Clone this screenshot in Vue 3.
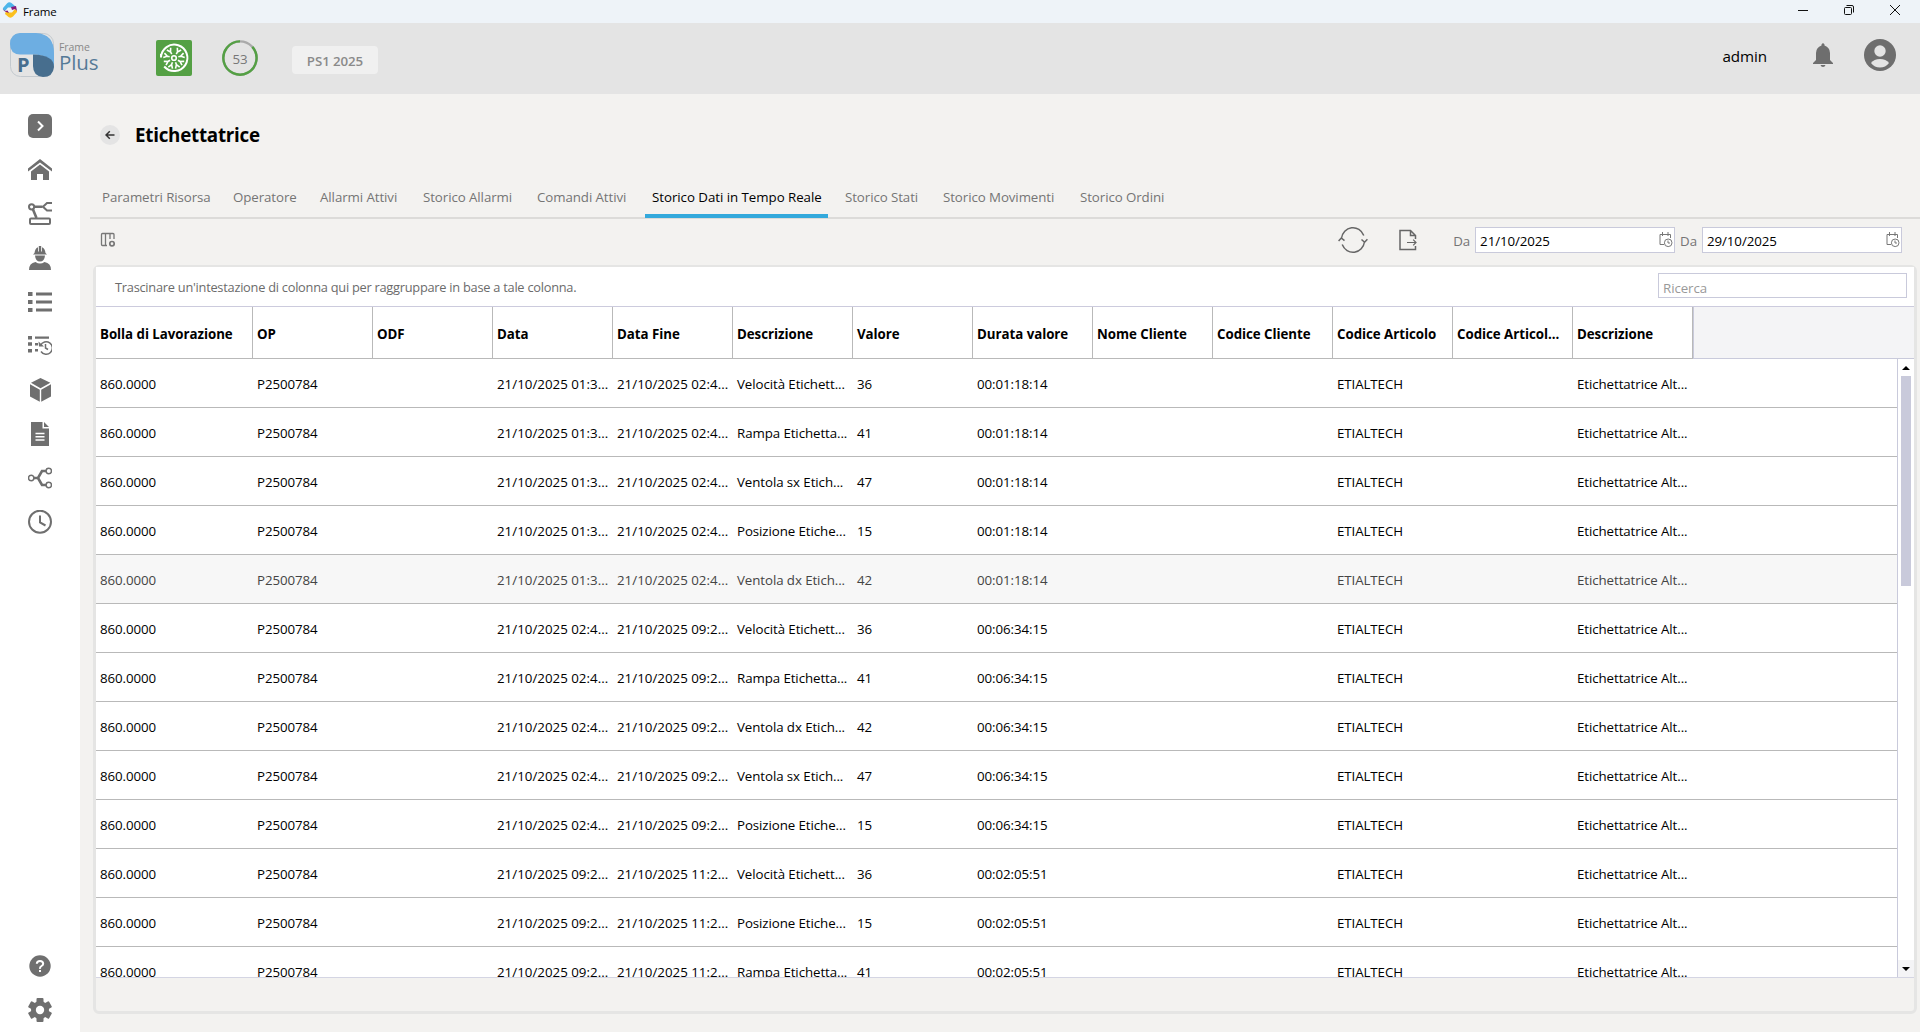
<script setup>
import { ref } from 'vue';

const tabs = [
  'Parametri Risorsa',
  'Operatore',
  'Allarmi Attivi',
  'Storico Allarmi',
  'Comandi Attivi',
  'Storico Dati in Tempo Reale',
  'Storico Stati',
  'Storico Movimenti',
  'Storico Ordini'
];
const activeTab = ref(5);

const columns = [
  'Bolla di Lavorazione',
  'OP',
  'ODF',
  'Data',
  'Data Fine',
  'Descrizione',
  'Valore',
  'Durata valore',
  'Nome Cliente',
  'Codice Cliente',
  'Codice Articolo',
  'Codice Articol...',
  'Descrizione'
];

const makeRow = (start, end, description, value, duration) => [
  '860.0000', 'P2500784', '', `21/10/2025 ${start}...`, `21/10/2025 ${end}...`,
  `${description}...`, value, duration, '', '', 'ETIALTECH', '', 'Etichettatrice Alt...'
];

const rows = [
  makeRow('01:3', '02:4', 'Velocità Etichett', '36', '00:01:18:14'),
  makeRow('01:3', '02:4', 'Rampa Etichetta', '41', '00:01:18:14'),
  makeRow('01:3', '02:4', 'Ventola sx Etich', '47', '00:01:18:14'),
  makeRow('01:3', '02:4', 'Posizione Etiche', '15', '00:01:18:14'),
  makeRow('01:3', '02:4', 'Ventola dx Etich', '42', '00:01:18:14'),
  makeRow('02:4', '09:2', 'Velocità Etichett', '36', '00:06:34:15'),
  makeRow('02:4', '09:2', 'Rampa Etichetta', '41', '00:06:34:15'),
  makeRow('02:4', '09:2', 'Ventola dx Etich', '42', '00:06:34:15'),
  makeRow('02:4', '09:2', 'Ventola sx Etich', '47', '00:06:34:15'),
  makeRow('02:4', '09:2', 'Posizione Etiche', '15', '00:06:34:15'),
  makeRow('09:2', '11:2', 'Velocità Etichett', '36', '00:02:05:51'),
  makeRow('09:2', '11:2', 'Posizione Etiche', '15', '00:02:05:51'),
  makeRow('09:2', '11:2', 'Rampa Etichetta', '41', '00:02:05:51')
];
const hoveredRow = ref(4);

const dateFrom = ref('21/10/2025');
const dateTo = ref('29/10/2025');
const search = ref('');
const spokes = [30, 75, 120, 160, 200, 240, 285, 330];
const teeth = [0, 60, 120, 180, 240, 300];
</script>

<template>
  <div class="window">
    <div class="titlebar">
      <svg class="app-icon" width="16" height="16" viewBox="0 0 16 16">
        <path d="M1 6 5 1.5Q7-.5 9.500 1L13 4l1.500 4-4-2.500H6L3 9Q.5 8 1 6z" fill="#4db5ea" />
        <path d="M15 10 11 14.500Q9 16.500 6.500 15L3 12l1-3 3 1.500h3L13 7Q15.500 8 15 10z" fill="#fbc01e" />
        <path d="M.5 7 3 9.500 7 11 5.500 8.500 3.500 9zM9 5l5-1 1 5-2-2-3 1z" fill="#871a7b" />
      </svg>
      <span class="app-name">Frame</span>
      <div class="window-controls">
        <svg width="12" height="12" viewBox="0 0 12 12"><path d="M1 6.500h10" /></svg>
        <svg width="12" height="12" viewBox="0 0 12 12"><rect x="1.500" y="3.500" width="7" height="7" rx="1" /><path d="M3.500 1.500H9q1.500 0 1.500 1.500v5.500" /></svg>
        <svg width="12" height="12" viewBox="0 0 12 12"><path d="m1 1 10 10M11 1 1 11" /></svg>
      </div>
    </div>

    <header class="header">
      <div class="logo">
        <svg width="44" height="44" viewBox="0 0 44 44">
          <rect x=".5" y=".5" width="43" height="43" rx="10" fill="none" stroke="#c3c9ce" />
          <path d="M10 0H26Q44 1 44 20V34Q41 22 23 21.500H10Q0 21 0 11T10 0z" fill="#6daee2" />
          <path d="M23 21.500Q44 22 44 34 43 44 33 44 23 43 23 33z" fill="#476e8e" />
          <text x="7" y="39" class="logo-letter">P</text>
        </svg>
        <div class="logo-text">
          <span class="logo-small">Frame</span>
          <span class="logo-big">Plus</span>
        </div>
      </div>
      <div class="machine">
        <svg width="36" height="36" viewBox="0 0 36 36" fill="none" stroke="#fff">
          <path d="M5 17.500A13.200 13.200 0 1 1 8.200 26.500M5 14v3.500" stroke-width="2" />
          <circle cx="18" cy="18" r="2.300" stroke-width="1.600" />
          <g v-for="angle in spokes" :key="angle" :transform="`rotate(${angle} 18 18)`">
            <path d="M18 13.500V11M15.800 7.500 18 11l2.200-3.500" stroke-width="1.600" />
          </g>
        </svg>
      </div>
      <div class="gauge">
        <svg width="36" height="36" viewBox="0 0 36 36" fill="none" stroke-width="2.400">
          <circle cx="18" cy="18" r="16.600" stroke="#aaa" />
          <path d="M30.300 6.900A16.600 16.600 0 1 1 18 1.400" stroke="#54a044" />
        </svg>
        <span class="gauge-value">53</span>
      </div>
      <div class="shift">PS1 2025</div>
      <div class="user">
        <span class="user-name">admin</span>
        <svg class="bell" width="20" height="24" viewBox="0 0 20 24">
          <path d="M8.500 2.500V1.500Q10-.8 11.500 1.500v1Q17 4.500 17 10v7l3 3v1H0v-1l3-3v-7Q3 4.500 8.500 2.500zM7.500 22h5Q12 24 10 24T7.500 22z" />
        </svg>
        <svg width="32" height="32" viewBox="0 0 32 32">
          <circle cx="16" cy="16" r="16" />
          <circle cx="16" cy="12" r="5.700" fill="#e4e4e4" />
          <path d="M7 24Q10 20 16 20t9 4Q21.500 28.500 16 28.500T7 24z" fill="#e4e4e4" />
        </svg>
      </div>
    </header>

    <div class="body">
      <nav class="sidebar">
        <svg viewBox="0 0 24 24"><rect width="24" height="24" rx="5" /><path d="m10 7.500 4.500 4.500-4.500 4.500" class="cut" /></svg>
        <svg viewBox="0 0 24 24"><path d="m12 1 12 9.500v3L12 4.500 0 13.500v-3z" /><path d="m12 6.500 9 7V22h-6v-6H9v6H3v-8.500z" /></svg>
        <svg viewBox="0 0 24 24">
          <g class="line">
            <circle cx="3.600" cy="4.800" r="2.600" />
            <path d="M6.500 4.800h8M5 7.500l3.500 8.500" class="heavy" />
            <path d="M24 1h-5l-4 3.800 4 3.700h5" />
            <rect x="2" y="16.500" width="20" height="5.500" rx="1" />
          </g>
        </svg>
        <svg viewBox="0 0 24 24">
          <path d="M5 8.500 6.500 7Q7 2.500 10 1.200v4.300h.8V0h2.400v5.500h.8V1.200Q17 2.500 17.500 7L19 8.500z" />
          <path d="M7 9.500h10q-.5 6-5 6t-5-6zM1 24q0-7 6.500-8 4.500 3 9 0Q23 17 23 24z" />
        </svg>
        <svg viewBox="0 0 24 24"><path d="M0 2h4.500v4H0zm0 8h4.500v4H0zm0 8h4.500v4H0zM8 2.500h16v3H8zm0 8h16v3H8zm0 8h16v3H8z" /></svg>
        <svg viewBox="0 0 24 24">
          <path d="M0 2h4v3.500H0zm0 6.300h4v3.500H0zM0 15h4v3.500H0zM7 2.500h14v2.300H7zM7 9h3v2.500H7zm0 6h3v2.500H7z" />
          <g class="thin"><path d="M12.500 11.500A6.200 6.200 0 1 1 13 17.500M17.500 10v4l2.500 1.500" /></g><path d="m10.500 7.500.5 5h5z" />
        </svg>
        <svg viewBox="0 0 24 24"><path d="m12.500 0 9.800 4.800-9.800 5.400L3 4.800zM2 6.300l9.800 5.500v12L2 18.500zM23 6.300l-9.800 5.500v12L23 18.500z" /></svg>
        <svg viewBox="0 0 24 24"><path d="M3 0h11.500v6.500H21V24H3zM16 0l5 5h-5z" /><path d="M7.500 11.500h9M7.500 14.800h9M7.500 18h9" class="cut rule" /></svg>
        <svg viewBox="0 0 24 24">
          <g class="thin"><circle cx="3.200" cy="12" r="2.700" /><circle cx="20.800" cy="5" r="2.700" /><circle cx="20.800" cy="19" r="2.700" /></g>
          <path d="M6 12h4l4-7h4M10 12l4 7h4" class="heavy" />
        </svg>
        <svg viewBox="0 0 24 24"><g class="line"><circle cx="12" cy="11.700" r="11" /><path d="M12 5.500v7l5.500 3" /></g></svg>
        <div class="sidebar-bottom">
          <svg viewBox="0 0 24 24"><circle cx="12" cy="12" r="10.700" /><path d="M8.800 9.800Q9 7 12 7t3.200 2.700Q15.200 11 13.500 12T12 14.800M12 16v2" class="cut" /></svg>
          <svg viewBox="0 0 24 24">
            <rect v-for="angle in teeth" :key="angle" x="8.500" y="0" width="7" height="7" rx="1" :transform="`rotate(${angle} 12 12)`" />
            <circle cx="12" cy="12" r="9" />
            <circle cx="12" cy="12" r="4.200" fill="#fff" />
          </svg>
        </div>
      </nav>

      <main class="content">
        <div class="page-title">
          <button class="back">
            <svg width="10" height="10" viewBox="0 0 10 10"><path d="M9.500 5H1.200M4.800 1.200 1 5l3.800 3.800" /></svg>
          </button>
          <h1>Etichettatrice</h1>
        </div>

        <div class="tabs">
          <div v-for="(tab, i) in tabs" :key="tab" class="tab" :class="{ active: i === activeTab }" @click="activeTab = i">
            {{ tab }}
          </div>
        </div>

        <div class="toolbar">
          <svg class="columns-icon" width="16" height="16" viewBox="0 0 16 16">
            <path d="M5.500 1.500H2.500Q1.500 1.500 1.500 2.500v10q0 1 1 1h3zM5.500 1.500h4.500V7M10 1.500h3q1 0 1 1V7M5.500 13.500H7" />
            <circle cx="12" cy="11.700" r="2.200" stroke-width="1.700" />
          </svg>
          <div class="toolbar-right">
            <svg class="refresh" width="30" height="28" viewBox="0 0 30 28">
              <path d="M3.400 12.500A11.700 12.500 0 0 1 25.800 9.500M26.600 15.500A11.700 12.500 0 0 1 4.200 18.500M.6 15 3.300 12l3.200 2.600M23.500 13.500l3.100 2.800 2.800-3" />
            </svg>
            <svg class="export" width="18" height="22" viewBox="0 0 18 22">
              <path d="M16.500 10V6.500l-5-5H1v19h15.500V17M11.500 1.500v5h5" />
              <path d="M8 13.500h9M14.200 10.700l2.800 2.800-2.800 2.800" stroke-width="1.200" />
            </svg>
            <label>Da</label>
            <div class="date-box">
              <input v-model="dateFrom" />
              <svg width="14" height="16" viewBox="0 0 14 16"><path d="M5 12.500H1v-10h10.500V6M3.500 0v4M9 0v4" /><circle cx="9.200" cy="10.800" r="3.800" /><path d="M9 8.500V11h2" /></svg>
            </div>
            <label>Da</label>
            <div class="date-box">
              <input v-model="dateTo" />
              <svg width="14" height="16" viewBox="0 0 14 16"><path d="M5 12.500H1v-10h10.500V6M3.500 0v4M9 0v4" /><circle cx="9.200" cy="10.800" r="3.800" /><path d="M9 8.500V11h2" /></svg>
            </div>
          </div>
        </div>

        <section class="card">
          <div class="group-panel">
            <span class="group-hint">Trascinare un'intestazione di colonna qui per raggruppare in base a tale colonna.</span>
            <input v-model="search" class="search" placeholder="Ricerca" />
          </div>
          <div class="grid-header">
            <div v-for="(column, i) in columns" :key="i" class="header-cell">{{ column }}</div>
            <div class="header-filler"></div>
          </div>
          <div class="grid-body">
            <div class="grid-rows">
              <div v-for="(row, r) in rows" :key="r" class="row" :class="{ hovered: r === hoveredRow }">
                <div v-for="(cell, c) in row" :key="c" class="cell" :class="{ date: c === 3 || c === 4 }">{{ cell }}</div>
              </div>
            </div>
            <div class="scrollbar">
              <div class="scroll-button"><svg width="8" height="4" viewBox="0 0 8 4"><path d="M0 4 4 0l4 4z" /></svg></div>
              <div class="scroll-thumb"></div>
              <div class="scroll-button down"><svg width="8" height="4" viewBox="0 0 8 4"><path d="m0 0 4 4 4-4z" /></svg></div>
            </div>
          </div>
        </section>
      </main>
    </div>
  </div>
</template>

<style>
body {
  margin: 0;
  overflow: hidden;
}
</style>

<style scoped>
* {
  box-sizing: border-box;
}

.window {
  width: 1920px;
  height: 1032px;
  display: flex;
  flex-direction: column;
  background: #f3f2f0;
  font-family: 'Segoe UI', 'Open Sans', 'Noto Sans', sans-serif;
  font-size: 13.3px;
  letter-spacing: -0.08px;
  color: #000;
}

svg {
  display: block;
  flex: none;
}

.titlebar {
  height: 23px;
  flex: none;
  display: flex;
  align-items: center;
  padding: 0 19px 3px 2px;
  background: #eef3f8;
}

.app-name {
  margin: 2px 0 0 5px;
  font-size: 11.5px;
}

.window-controls {
  display: flex;
  gap: 34px;
  margin-left: auto;
}

.window-controls svg {
  fill: none;
  stroke: #111;
}

.header {
  height: 71px;
  flex: none;
  display: flex;
  align-items: flex-start;
  padding: 10px 24px 0 10px;
  background: #e4e4e4;
}

.logo {
  display: flex;
  gap: 5px;
  width: 146px;
}

.logo-letter {
  font-size: 20px;
  font-weight: 700;
  fill: #476e8e;
}

.logo-text {
  display: flex;
  flex-direction: column;
  padding-top: 7px;
}

.logo-small {
  font-size: 10.5px;
  line-height: 14px;
  color: #888;
}

.logo-big {
  font-size: 20.5px;
  line-height: 17px;
  color: #557a97;
}

.machine {
  width: 36px;
  height: 36px;
  margin-top: 7px;
  border-radius: 2px;
  background: #54a044;
}

.gauge {
  display: grid;
  place-items: center;
  margin: 7px 0 0 30px;
}

.gauge > * {
  grid-area: 1 / 1;
}

.gauge-value {
  padding-top: 1px;
  color: #777;
}

.shift {
  width: 86px;
  height: 28px;
  margin: 13px 0 0 34px;
  border-radius: 4px;
  background: #f0f0f0;
  font-weight: 600;
  line-height: 30px;
  text-align: center;
  color: #8a8a8a;
}

.user {
  display: flex;
  align-items: center;
  margin: 6px 0 0 auto;
  fill: #6e6e6e;
}

.user-name {
  padding-top: 2px;
  font-size: 15.2px;
}

.bell {
  margin: 0 31px 0 46px;
}

.body {
  flex: 1;
  min-height: 0;
  display: flex;
}

.sidebar {
  width: 80px;
  flex: none;
  display: flex;
  flex-direction: column;
  align-items: center;
  gap: 20px;
  padding: 20px 0 10px;
  background: #fff;
}

.sidebar svg {
  width: 24px;
  height: 24px;
  fill: #6f6f6f;
}

.sidebar-bottom {
  display: flex;
  flex-direction: column;
  gap: 20px;
  margin-top: auto;
}

.cut {
  fill: none;
  stroke: #fff;
  stroke-width: 2;
}

.rule {
  stroke-width: 1.4;
}

.line {
  fill: none;
  stroke: #6f6f6f;
  stroke-width: 2;
}

.thin {
  fill: none;
  stroke: #6f6f6f;
  stroke-width: 1.5;
}

.heavy {
  fill: none;
  stroke: #6f6f6f;
  stroke-width: 2.6;
}

.content {
  flex: 1;
  min-width: 0;
  display: flex;
  flex-direction: column;
  padding-left: 10px;
}

.page-title {
  height: 82px;
  display: flex;
  align-items: center;
  gap: 15px;
  padding-left: 10px;
}

.page-title h1 {
  margin: 0;
  font-size: 18.8px;
  font-weight: 700;
  letter-spacing: -0.25px;
}

.back {
  width: 20px;
  height: 20px;
  display: grid;
  place-items: center;
  padding: 0;
  border: 0;
  border-radius: 50%;
  background: #e4e4e4;
}

.back svg {
  fill: none;
  stroke: #333;
  stroke-width: 1.5;
}

.tabs {
  height: 43px;
  display: grid;
  grid-template-columns: 131px 87px 103px 114px 114px 194px 98px 137px 1fr;
  padding-left: 6px;
  border-bottom: 2px solid #dcdbd9;
}

.tab {
  height: 42px;
  padding-left: 6px;
  line-height: 42px;
  white-space: nowrap;
  color: #757575;
}

.tab.active {
  width: 183px;
  padding-left: 7px;
  border-bottom: 4px solid #33a9dc;
  letter-spacing: -0.04px;
  color: #000;
}

.toolbar {
  height: 46px;
  flex: none;
  display: flex;
  align-items: flex-start;
  padding: 7px 18px 0 10px;
}

.columns-icon {
  margin-top: 6px;
  fill: none;
  stroke: #777;
  stroke-width: 1.3;
}

.toolbar-right {
  display: flex;
  align-items: center;
  margin-left: auto;
}

.toolbar label {
  margin: 1px 5px 0 6px;
  color: #757575;
}

.refresh,
.export {
  fill: none;
  stroke: #666;
  stroke-width: 1.5;
}

.refresh {
  margin-right: 31px;
}

.export {
  margin-right: 30px;
}

.date-box {
  width: 200px;
  height: 26px;
  display: flex;
  align-items: center;
  padding-right: 1px;
  border: 1px solid #c9cadb;
  background: #fff;
}

.date-box + label {
  margin-left: 5px;
}

.date-box svg {
  fill: none;
  stroke: #777;
}

input {
  flex: 1;
  min-width: 0;
  padding: 2px 0 0 4px;
  border: 0;
  outline: none;
  background: transparent;
  font: inherit;
  letter-spacing: inherit;
  color: #000;
}

.card {
  width: 1824px;
  height: 749px;
  margin-left: 3px;
  border: 3px solid #e5e5e4;
  border-top-width: 2px;
  border-radius: 6px;
}

.group-panel {
  height: 40px;
  display: flex;
  align-items: center;
  justify-content: space-between;
  padding: 0 7px 0 19px;
  border-bottom: 1px solid #cccbdd;
  background: #fff;
  color: #6b6b6b;
}

.group-hint {
  font-size: 12.8px;
  letter-spacing: -0.25px;
}

.search {
  flex: none;
  width: 249px;
  height: 25px;
  margin-bottom: 2px;
  padding-top: 4px;
  border: 1px solid #c9cadb;
}

.search::placeholder {
  color: #999;
}

.grid-header {
  height: 52px;
  display: flex;
  background: #fff;
}

.header-cell,
.cell {
  width: 120px;
  flex: none;
  padding-left: 4px;
  white-space: nowrap;
  overflow: hidden;
}

.header-cell:first-child,
.cell:first-child {
  width: 157px;
}

.cell.date {
  letter-spacing: 0.02px;
}

.header-cell {
  border-right: 1px solid #b9b9b9;
  border-bottom: 1px solid #b9b9b9;
  font-weight: 700;
  letter-spacing: -0.04px;
  line-height: 54px;
}

.header-filler {
  flex: 1;
  border-left: 1px solid #c9cadb;
  border-bottom: 1px solid #c9cadb;
  background: #f4f4f6;
}

.grid-body {
  height: 619px;
  display: flex;
  border-bottom: 1px solid #d4d5e3;
  background: #fff;
}

.grid-rows {
  flex: 1;
  overflow: hidden;
}

.row {
  height: 49px;
  display: flex;
  border-bottom: 1px solid #b9b9b9;
  line-height: 50px;
}

.row.hovered {
  background: #f7f7f7;
  color: #444;
}

.scrollbar {
  width: 17px;
  display: flex;
  flex-direction: column;
  align-items: center;
  border-left: 1px solid #c9cadb;
}

.scroll-button {
  width: 16px;
  height: 17px;
  display: grid;
  place-items: center;
}

.scroll-button.down {
  margin-top: auto;
  background: #f4f4f6;
}

.scroll-thumb {
  width: 10px;
  height: 210px;
  background: #c9cadb;
}
</style>
